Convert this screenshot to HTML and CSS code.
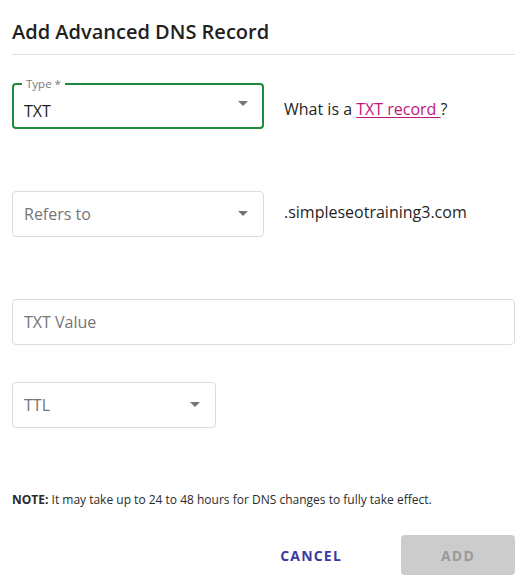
FILE: index.html
```html
<!DOCTYPE html>
<html>
<head>
<meta charset="utf-8">
<link rel="stylesheet" href="styles.css">
</head>
<body>
<div class="dialog">
  <h1 class="title">Add Advanced DNS Record</h1>
  <div class="divider"></div>

  <div class="row row-type">
    <div class="field select focused w-252">
      <span class="float-label">Type *</span>
      <span class="value">TXT</span>
      <span class="caret"></span>
    </div>
    <div class="side-text">What is a <a class="link" href="#">TXT record </a>?</div>
  </div>

  <div class="row row-refers">
    <div class="field select w-252">
      <span class="placeholder">Refers to</span>
      <span class="caret"></span>
    </div>
    <div class="side-text domain">.simpleseotraining3.com</div>
  </div>

  <div class="row row-value">
    <div class="field w-full">
      <span class="placeholder">TXT Value</span>
    </div>
  </div>

  <div class="row row-ttl">
    <div class="field select w-204">
      <span class="placeholder">TTL</span>
      <span class="caret"></span>
    </div>
  </div>

  <p class="note"><b>NOTE:</b> It may take up to 24 to 48 hours for DNS changes to fully take effect.</p>

  <div class="actions">
    <button class="btn btn-cancel">CANCEL</button>
    <button class="btn btn-add">ADD</button>
  </div>
</div>
</body>
</html>
```
FILE: styles.css
```css
* { box-sizing: border-box; }
html, body { margin: 0; padding: 0; background: #fff; }
body {
  font-family: "Open Sans", "Liberation Sans", sans-serif;
  color: #212121;
  width: 532px;
  height: 585px;
  overflow: hidden;
}
.dialog {
  padding: 0 17px 0 12px;
  display: flex;
  flex-direction: column;
}
.title {
  margin: 18px 0 0 0;
  font-size: 20px;
  font-weight: 600;
  line-height: 27px;
  color: #1f1f1f;
}
.divider {
  margin-top: 9px;
  height: 1px;
  background: #e0e0e0;
}
.row {
  display: flex;
  align-items: center;
}
.row-type { margin-top: 28px; }
.row-refers { margin-top: 62px; }
.row-value { margin-top: 62px; }
.row-ttl { margin-top: 37px; }

.field {
  position: relative;
  height: 46px;
  border: 1px solid #dcdcdc;
  border-radius: 4px;
  display: flex;
  align-items: center;
  padding: 0 11px;
  font-size: 16px;
}
.field.focused {
  border: 2px solid #1f8a3b;
  padding: 0 10px;
}
.w-252 { width: 252px; }
.w-204 { width: 204px; }
.w-full { width: 100%; }

.float-label {
  position: absolute;
  top: -8px;
  left: 8px;
  padding: 0 4px;
  background: #fff;
  font-size: 11.5px;
  line-height: 14px;
  color: #7a7a7a;
}
.value { color: #1f1f1f; padding-top: 10px; }
.placeholder { color: #757575; }
.caret {
  position: absolute;
  right: 15px;
  top: 50%;
  margin-top: -3px;
  width: 0;
  height: 0;
  border-left: 5px solid transparent;
  border-right: 5px solid transparent;
  border-top: 5px solid #757575;
}
.focused .caret { right: 14px; margin-top: -5px; }

.side-text {
  margin-left: 20px;
  font-size: 16px;
  color: #1f1f1f;
}
.row-type .side-text { padding-top: 6px; }
.domain { margin-top: -4px; }
.link {
  color: #c2177a;
  text-decoration: underline;
  text-underline-offset: 2px;
}

.note {
  margin: 64px 0 0 0;
  font-size: 12px;
  line-height: 16px;
  color: #2a2a2a;
}
.note b { font-weight: 700; }

.actions {
  margin-top: 27px;
  display: flex;
  justify-content: flex-end;
  align-items: center;
  gap: 43px;
}
.btn {
  font-family: "Open Sans", "Liberation Sans", sans-serif;
  font-size: 14px;
  font-weight: 700;
  letter-spacing: 1.2px;
  border: none;
  border-radius: 4px;
  height: 40px;
  cursor: pointer;
}
.btn-cancel {
  background: transparent;
  color: #3b3aa0;
  padding: 0 16px;
}
.btn-add {
  width: 114px;
  background: #cccccc;
  color: #9a9a9a;
}
```
